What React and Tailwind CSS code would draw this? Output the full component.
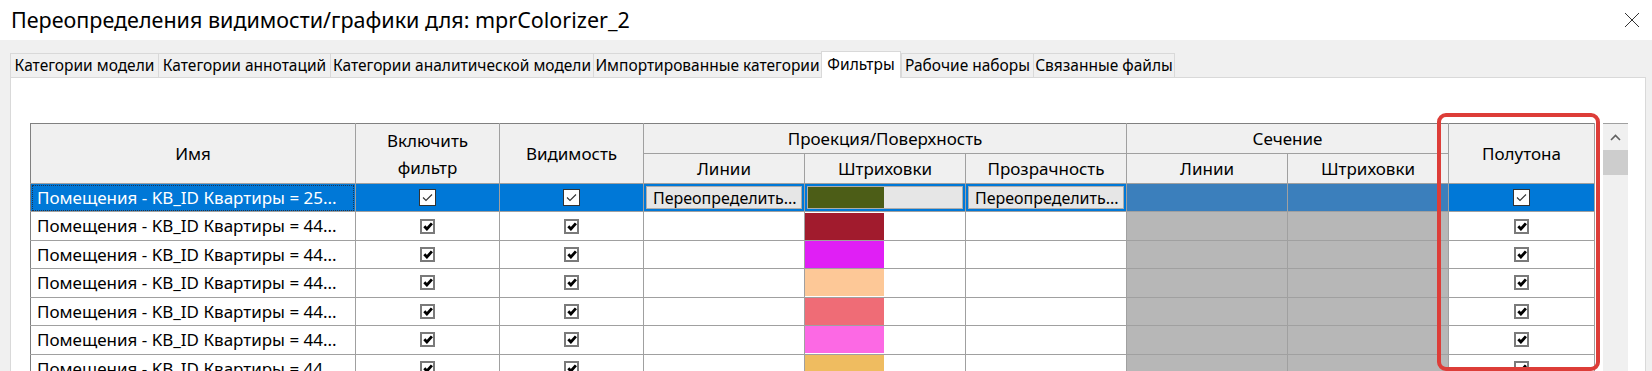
import React from 'react';

const tabs = [
  { label: 'Категории модели', w: 'w-[148px]' },
  { label: 'Категории аннотаций', w: 'w-[172px]' },
  { label: 'Категории аналитической модели', w: 'w-[263px]' },
  { label: 'Импортированные категории', w: 'w-[228px]' },
  { label: 'Фильтры', w: 'w-[80px]', active: true },
  { label: 'Рабочие наборы', w: 'w-[132px]' },
  { label: 'Связанные файлы', w: 'w-[142px]' },
];

const rows = [
  { name: 'Помещения - KB_ID Квартиры = 25...', color: '#4c5d17', selected: true },
  { name: 'Помещения - KB_ID Квартиры = 44...', color: '#a11b2d' },
  { name: 'Помещения - KB_ID Квартиры = 44...', color: '#e01ff5' },
  { name: 'Помещения - KB_ID Квартиры = 44...', color: '#fdc897' },
  { name: 'Помещения - KB_ID Квартиры = 44...', color: '#ef6c76' },
  { name: 'Помещения - KB_ID Квартиры = 44...', color: '#fc69e4' },
  { name: 'Помещения - KB_ID Квартиры = 44...', color: '#efbc60' },
];

const Check = ({ selected }) => {
  if (selected) {
    return (
      <div className="mx-auto w-[17px] h-[17px] bg-white border border-[#333] flex items-center justify-center">
        <svg width="11" height="9" viewBox="0 0 11 9">
          <path d="M1 4.5 L4 7.5 L10 1.5" fill="none" stroke="#333" strokeWidth="1.1" />
        </svg>
      </div>
    );
  }
  return (
    <div className="mx-auto w-[15px] h-[15px] bg-white border-2 border-[#7a7a7a] flex items-center justify-center">
      <svg width="10" height="9" viewBox="0 0 10 9">
        <path d="M1.3 4.3 L3.9 7 L8.9 1.4" fill="none" stroke="#000" strokeWidth="2.8" />
      </svg>
    </div>
  );
};

const th = 'border border-[#a0a0a0] font-normal text-center';
const td = 'border border-[#a0a0a0] p-0 h-[28px]';
const hatchSel = 'bg-[image:repeating-conic-gradient(#0a63b3_0_25%,#6c9ac4_0_50%)] bg-[length:2px_2px]';
const hatch = 'bg-[image:repeating-conic-gradient(#8a8a8a_0_25%,#e4e4e4_0_50%)] bg-[length:2px_2px]';

export default function App() {
  return (
    <div className="relative w-[1652px] h-[371px] overflow-hidden bg-[#f0f0f0] font-['Noto_Sans',sans-serif] text-black">
      <div className="h-[40px] bg-white flex items-center justify-between pl-[11px] pr-[12px]">
        <span className="text-[21.5px] leading-none">Переопределения видимости/графики для: mprColorizer_2</span>
        <svg width="16" height="16" viewBox="0 0 16 16">
          <path d="M1 1 L15 15 M15 1 L1 15" stroke="#333" strokeWidth="1" fill="none" />
        </svg>
      </div>

      <div className="pt-[13px]">
        <div className="flex items-end h-[24px] pl-[10px]">
          {tabs.map((t) =>
            t.active ? (
              <div
                key={t.label}
                className={`${t.w} relative z-10 h-[27px] -mb-[1px] bg-white border-t border-x border-[#d9d9d9] flex items-center justify-center text-[15.5px]`}
              >
                {t.label}
              </div>
            ) : (
              <div
                key={t.label}
                className={`${t.w} h-[24px] border-t border-l border-[#d9d9d9] last:border-r flex items-center justify-center text-[15.5px]`}
              >
                {t.label}
              </div>
            )
          )}
        </div>

        <div className="ml-[10px] w-[1636px] h-[300px] bg-white border border-[#d9d9d9] pt-[45px] pl-[19px]">
          <div className="flex">
            <table className="table-fixed border-collapse w-[1564px] text-[17px]">
              <colgroup>
                <col className="w-[325px]" />
                <col className="w-[144px]" />
                <col className="w-[144px]" />
                <col className="w-[161px]" />
                <col className="w-[161px]" />
                <col className="w-[161px]" />
                <col className="w-[161px]" />
                <col className="w-[161px]" />
                <col className="w-[146px]" />
              </colgroup>
              <thead className="bg-[#f0f0f0]">
                <tr className="h-[30px]">
                  <th rowSpan={2} className={`${th} border-t-[#808080] border-l-[#808080]`}>Имя</th>
                  <th rowSpan={2} className={`${th} border-t-[#808080] leading-[27px]`}>
                    Включить
                    <br />
                    фильтр
                  </th>
                  <th rowSpan={2} className={`${th} border-t-[#808080]`}>Видимость</th>
                  <th colSpan={3} className={`${th} border-t-[#808080]`}>Проекция/Поверхность</th>
                  <th colSpan={2} className={`${th} border-t-[#808080]`}>Сечение</th>
                  <th rowSpan={2} className={`${th} border-t-[#808080]`}>Полутона</th>
                </tr>
                <tr className="h-[30px]">
                  <th className={th}>Линии</th>
                  <th className={th}>Штриховки</th>
                  <th className={th}>Прозрачность</th>
                  <th className={th}>Линии</th>
                  <th className={th}>Штриховки</th>
                </tr>
              </thead>
              <tbody>
                {rows.map((r, i) =>
                  r.selected ? (
                    <tr key={i} className="bg-[#0078d7] text-white">
                      <td className={`${td} border-l-[#808080] px-[2px]`}>
                        <div className="h-[24px] px-[4px] flex items-center outline-1 outline-dotted outline-[#20344f] whitespace-nowrap overflow-hidden">
                          {r.name}
                        </div>
                      </td>
                      <td className={td}><Check selected /></td>
                      <td className={td}><Check selected /></td>
                      <td className={`${td} p-[2px] text-black text-[16px]`}>
                        <div className="h-[23px] bg-[#e6e6e6] border border-[#adadad] px-[6px] flex items-center whitespace-nowrap overflow-hidden">
                          Переопределить...
                        </div>
                      </td>
                      <td className={`${td} p-[2px]`}>
                        <div className="h-[23px] bg-[#e6e6e6] border border-[#adadad] flex">
                          <div className="w-[76px] h-full" style={{ backgroundColor: r.color }} />
                        </div>
                      </td>
                      <td className={`${td} p-[2px] text-black text-[16px]`}>
                        <div className="h-[23px] bg-[#e6e6e6] border border-[#adadad] px-[6px] flex items-center whitespace-nowrap overflow-hidden">
                          Переопределить...
                        </div>
                      </td>
                      <td className={`${td} ${hatchSel}`} />
                      <td className={`${td} ${hatchSel}`} />
                      <td className={td}><Check selected /></td>
                    </tr>
                  ) : (
                    <tr key={i} className="bg-white">
                      <td className={`${td} border-l-[#808080] px-[6px] whitespace-nowrap overflow-hidden`}>{r.name}</td>
                      <td className={td}><Check /></td>
                      <td className={td}><Check /></td>
                      <td className={td} />
                      <td className={td}>
                        <div className="w-[79px] h-[27px]" style={{ backgroundColor: r.color }} />
                      </td>
                      <td className={td} />
                      <td className={`${td} ${hatch}`} />
                      <td className={`${td} ${hatch}`} />
                      <td className={td}><Check /></td>
                    </tr>
                  )
                )}
              </tbody>
            </table>

            <div className="ml-[8px] w-[25px] h-[260px] bg-[#f0f0f0] border-t border-[#a0a0a0] flex flex-col">
              <div className="h-[26px] flex items-center justify-center">
                <svg width="11" height="7" viewBox="0 0 11 7">
                  <path d="M1 6 L5.5 1.5 L10 6" fill="none" stroke="#606060" strokeWidth="1.6" />
                </svg>
              </div>
              <div className="h-[25px] bg-[#cdcdcd]" />
            </div>
          </div>
        </div>
      </div>

      <div className="absolute left-[1437px] top-[113px] w-[163px] h-[258px] border-[4px] border-[#dd3d38] rounded-[9px]" />
    </div>
  );
}
